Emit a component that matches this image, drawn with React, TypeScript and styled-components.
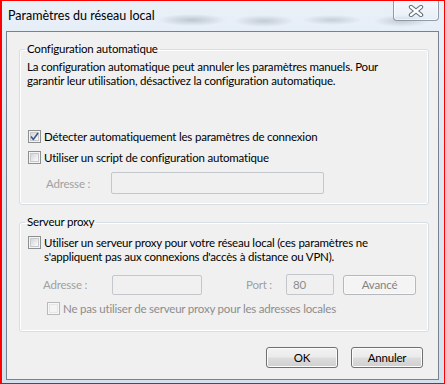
import styled, { createGlobalStyle } from "styled-components";

const GlobalStyle = createGlobalStyle`
  html, body {
    margin: 0;
    padding: 0;
    background: #ffffff;
  }
  * {
    box-sizing: border-box;
  }
`;

const Window = styled.div`
  width: 445px;
  height: 384px;
  display: flex;
  flex-direction: column;
  border: 1px solid #ff0000;
  border-left-width: 2px;
  font-family: Lato, "Liberation Sans", sans-serif;
  font-size: 11.5px;
  letter-spacing: -0.2px;
  color: #000;
  background:
    radial-gradient(ellipse 34px 6px at 190px 19px, rgba(110, 120, 130, 0.35), transparent),
    radial-gradient(ellipse 30px 6px at 262px 20px, rgba(110, 120, 130, 0.3), transparent),
    radial-gradient(ellipse 30px 5px at 330px 19px, rgba(110, 120, 130, 0.28), transparent),
    radial-gradient(ellipse 28px 6px at 400px 20px, rgba(110, 120, 130, 0.3), transparent),
    linear-gradient(180deg, #e9f0f8 0%, #dbe6f2 40%, #d3e0ee 100%);
`;

const TitleBar = styled.div`
  height: 30px;
  display: flex;
  align-items: flex-start;
`;

const Title = styled.div`
  padding: 8px 0 0 6px;
  line-height: 14px;
  font-size: 12.5px;
  letter-spacing: 0;
  color: #000;
`;

const CloseButton = styled.div`
  margin-left: auto;
  margin-right: 5px;
  width: 46px;
  height: 20px;
  display: flex;
  align-items: center;
  justify-content: center;
  border: 1px solid rgba(70, 80, 95, 0.55);
  border-top: none;
  border-radius: 0 0 4px 4px;
  background: linear-gradient(180deg, rgba(255, 255, 255, 0.55), rgba(230, 238, 246, 0.35));
  box-shadow: inset 0 0 0 1px rgba(255, 255, 255, 0.6);
`;

const Client = styled.div`
  flex: 1;
  margin: 0 5px 3px 4px;
  border: 1px solid #77828e;
  background: #f0f0f0;
  padding: 0 9px 0 12px;
  display: flex;
  flex-direction: column;
`;

const Group = styled.fieldset<{ $bottom: number }>`
  margin: 10px 0 0;
  padding: 0 8px ${(p) => p.$bottom}px 8px;
  min-width: 0;
  border: 1px solid #d5dfe5;
  border-radius: 3px;
  box-shadow: inset 0 0 0 1px #ffffff;
`;

const Legend = styled.legend`
  margin-left: -3px;
  padding: 0 2px;
  line-height: 14px;
`;

const Description = styled.p`
  margin: 4px 0 0 -1px;
  line-height: 14px;
`;

const CheckRow = styled.label<{ $top: number; $indent?: number; $disabled?: boolean }>`
  display: flex;
  align-items: flex-start;
  gap: 3px;
  margin-top: ${(p) => p.$top}px;
  margin-left: ${(p) => p.$indent ?? 0}px;
  line-height: 14px;
  min-height: 16px;
  padding-top: 1px;
  color: ${(p) => (p.$disabled ? "#8d8d8d" : "#000")};
`;

const Box = styled.span<{ $disabled?: boolean }>`
  flex: none;
  position: relative;
  width: 13px;
  height: 13px;
  border: 1px solid ${(p) => (p.$disabled ? "#b9b9b9" : "#8e8f8f")};
  background: ${(p) => (p.$disabled ? "#f7f7f7" : "#f4f4f4")};
  display: flex;
  align-items: center;
  justify-content: center;

  &::before {
    content: "";
    position: absolute;
    inset: 1px;
    border: 1px solid ${(p) => (p.$disabled ? "#e6e6e6" : "#c6c9cd")};
    background: ${(p) =>
      p.$disabled
        ? "#f4f4f4"
        : "linear-gradient(135deg, #d3d6da 0%, #eef0f2 70%, #fafafa 100%)"};
  }

  svg {
    position: relative;
  }
`;

const FieldRow = styled.div<{ $top: number; $indent: number; $height: number }>`
  display: flex;
  align-items: center;
  margin-top: ${(p) => p.$top}px;
  padding-left: ${(p) => p.$indent}px;
  height: ${(p) => p.$height}px;
`;

const FieldLabel = styled.span<{ $width: number; $gap?: number }>`
  width: ${(p) => p.$width}px;
  margin-left: ${(p) => p.$gap ?? 0}px;
  flex: none;
  color: #a0a0a0;
`;

const TextBox = styled.div<{ $width: number; $height: number }>`
  width: ${(p) => p.$width}px;
  height: ${(p) => p.$height}px;
  flex: none;
  border: 1px solid #c3c7cb;
  border-radius: 2px;
  background: #f0f0f0;
  color: #8d8d8d;
  padding: 0 0 0 6px;
  display: flex;
  align-items: center;
`;

const Button = styled.div`
  width: 72px;
  height: 21px;
  flex: none;
  display: flex;
  align-items: center;
  justify-content: center;
  border: 1px solid #707070;
  border-radius: 3px;
  color: #000;
  background: linear-gradient(180deg, #f2f2f2 0%, #ebebeb 48%, #dddddd 52%, #cfcfcf 100%);
  box-shadow: inset 0 0 0 1px #fcfcfc;
`;

const DisabledButton = styled(Button)`
  width: 73px;
  height: 20px;
  margin-left: 9px;
  border-color: #b5b9bd;
  color: #838383;
  background: #f4f4f4;
  box-shadow: inset 0 0 0 1px #f9f9f9;
`;

const ButtonRow = styled.div`
  display: flex;
  justify-content: flex-end;
  gap: 13px;
  margin-top: 15px;
  padding-right: 6px;
`;

function CheckMark() {
  return (
    <svg width="9" height="9" viewBox="0 0 9 9">
      <path
        d="M1 4.6 L3.4 7.4 L8 1"
        fill="none"
        stroke="#3c5588"
        strokeWidth="1.6"
        strokeLinejoin="round"
      />
    </svg>
  );
}

function CloseGlyph() {
  return (
    <svg width="16" height="12" viewBox="0 0 16 12">
      <path d="M3 2 L13 10 M13 2 L3 10" stroke="#5f6a77" strokeWidth="4.4" strokeLinecap="round" />
      <path d="M3 2 L13 10 M13 2 L3 10" stroke="#ffffff" strokeWidth="2.4" strokeLinecap="round" />
    </svg>
  );
}

export default function App() {
  return (
    <>
      <GlobalStyle />
      <Window>
        <TitleBar>
          <Title>Paramètres du réseau local</Title>
          <CloseButton>
            <CloseGlyph />
          </CloseButton>
        </TitleBar>

        <Client>
          <Group $bottom={10}>
            <Legend>Configuration automatique</Legend>
            <Description>
              La configuration automatique peut annuler les paramètres manuels. Pour
              <br />
              garantir leur utilisation, désactivez la configuration automatique.
            </Description>

            <CheckRow $top={41}>
              <Box>
                <CheckMark />
              </Box>
              Détecter automatiquement les paramètres de connexion
            </CheckRow>
            <CheckRow $top={5}>
              <Box />
              Utiliser un script de configuration automatique
            </CheckRow>

            <FieldRow $top={6} $indent={18} $height={22}>
              <FieldLabel $width={65}>Adresse :</FieldLabel>
              <TextBox $width={213} $height={22} />
            </FieldRow>
          </Group>

          <Group $bottom={14}>
            <Legend>Serveur proxy</Legend>
            <CheckRow $top={6}>
              <Box />
              <span>
                Utiliser un serveur proxy pour votre réseau local (ces paramètres ne
                <br />
                s'appliquent pas aux connexions d'accès à distance ou VPN).
              </span>
            </CheckRow>

            <FieldRow $top={10} $indent={15} $height={21}>
              <FieldLabel $width={69}>Adresse :</FieldLabel>
              <TextBox $width={90} $height={20} />
              <FieldLabel $width={40} $gap={44}>
                Port :
              </FieldLabel>
              <TextBox $width={48} $height={21}>
                80
              </TextBox>
              <DisabledButton>Avancé</DisabledButton>
            </FieldRow>

            <CheckRow $top={6} $indent={19} $disabled>
              <Box $disabled />
              Ne pas utiliser de serveur proxy pour les adresses locales
            </CheckRow>
          </Group>

          <ButtonRow>
            <Button>OK</Button>
            <Button>Annuler</Button>
          </ButtonRow>
        </Client>
      </Window>
    </>
  );
}
